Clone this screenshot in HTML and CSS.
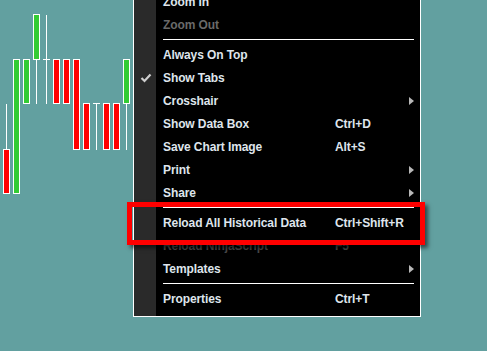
FILE: index.html
```html
<!DOCTYPE html>
<html lang="en">
<head>
    <meta charset="UTF-8">
    <meta name="viewport" content="width=device-width, initial-scale=1.0">
    <title>Chart Context Menu</title>
    <link rel="stylesheet" href="styles.css">
</head>
<body>
    <div class="chart">
        <svg width="133" height="351" viewBox="0 0 133 351">
            <g stroke="#fff" stroke-width="1" fill="none">
                <line x1="6.5" y1="104" x2="6.5" y2="149"/>
                <line x1="36.5" y1="59" x2="36.5" y2="104"/>
                <line x1="46.5" y1="15" x2="46.5" y2="104"/>
                <line x1="43" y1="59.5" x2="50" y2="59.5"/>
                <line x1="96.5" y1="103" x2="96.5" y2="150"/>
                <line x1="93" y1="103.5" x2="100" y2="103.5"/>
                <line x1="126.5" y1="103" x2="126.5" y2="150"/>
            </g>
            <g stroke="#fff" stroke-width="1">
                <rect class="down" x="3.5" y="149.5" width="6" height="44"/>
                <rect class="up" x="13.5" y="59.5" width="6" height="134"/>
                <rect class="up" x="23.5" y="59.5" width="6" height="44"/>
                <rect class="up" x="33.5" y="14.5" width="6" height="45"/>
                <rect class="down" x="53.5" y="59.5" width="6" height="44"/>
                <rect class="down" x="63.5" y="59.5" width="6" height="44"/>
                <rect class="down" x="73.5" y="59.5" width="6" height="90"/>
                <rect class="down" x="83.5" y="103.5" width="6" height="46"/>
                <rect class="down" x="103.5" y="103.5" width="6" height="46"/>
                <rect class="down" x="113.5" y="103.5" width="6" height="46"/>
                <rect class="up" x="123.5" y="59.5" width="6" height="44"/>
            </g>
        </svg>
    </div>

    <div class="menu">
        <div class="item"><span class="icon"></span><span class="label">Zoom In</span><span class="key"></span><span class="sub"></span></div>
        <div class="item disabled"><span class="icon"></span><span class="label">Zoom Out</span><span class="key"></span><span class="sub"></span></div>
        <div class="sep"></div>
        <div class="item"><span class="icon"></span><span class="label">Always On Top</span><span class="key"></span><span class="sub"></span></div>
        <div class="item">
            <span class="icon">
                <svg width="12" height="10" viewBox="0 0 12 10"><polyline points="1.5,5 4.5,8 10.5,1.5" fill="none" stroke="#cfcfcf" stroke-width="2.2"/></svg>
            </span>
            <span class="label">Show Tabs</span><span class="key"></span><span class="sub"></span>
        </div>
        <div class="item"><span class="icon"></span><span class="label">Crosshair</span><span class="key"></span><span class="sub"><i class="arrow"></i></span></div>
        <div class="item"><span class="icon"></span><span class="label">Show Data Box</span><span class="key">Ctrl+D</span><span class="sub"></span></div>
        <div class="item"><span class="icon"></span><span class="label">Save Chart Image</span><span class="key">Alt+S</span><span class="sub"></span></div>
        <div class="item"><span class="icon"></span><span class="label">Print</span><span class="key"></span><span class="sub"><i class="arrow"></i></span></div>
        <div class="item"><span class="icon"></span><span class="label">Share</span><span class="key"></span><span class="sub"><i class="arrow"></i></span></div>
        <div class="sep"></div>
        <div class="item"><span class="icon"></span><span class="label">Reload All Historical Data</span><span class="key">Ctrl+Shift+R</span><span class="sub"></span></div>
        <div class="item muted"><span class="icon"></span><span class="label">Reload NinjaScript</span><span class="key">F5</span><span class="sub"></span></div>
        <div class="item"><span class="icon"></span><span class="label">Templates</span><span class="key"></span><span class="sub"><i class="arrow"></i></span></div>
        <div class="sep"></div>
        <div class="item"><span class="icon"></span><span class="label">Properties</span><span class="key">Ctrl+T</span><span class="sub"></span></div>
    </div>

    <div class="highlight"></div>
</body>
</html>
```

FILE: styles.css
```css
body {
    margin: 0;
    background: #62a0a0;
    font-family: "Liberation Sans", Arial, sans-serif;
    overflow: hidden;
}
.chart {
    height: 351px;
}
.chart svg {
    display: block;
}
.up {
    fill: #33cc33;
}
.down {
    fill: #ff0000;
}
.menu {
    position: absolute;
    left: 133px;
    top: -14px;
    width: 286px;
    border: 1px solid #fff;
    padding: 3px 0 6px;
    background: linear-gradient(90deg, #2a2a2a 22px, #000 22px);
    font-size: 12px;
    font-weight: bold;
    letter-spacing: -0.1px;
    color: #dfe5ec;
}
.item {
    display: grid;
    grid-template-columns: 22px 179px 70px 15px;
    height: 23px;
    align-items: center;
}
.icon {
    display: flex;
    justify-content: center;
    align-items: center;
    padding-left: 1px;
}
.icon svg {
    display: block;
}
.label {
    padding-left: 7px;
    white-space: nowrap;
}
.key {
    white-space: nowrap;
}
.sub {
    display: flex;
    padding-left: 4px;
}
.arrow {
    width: 0;
    height: 0;
    border-top: 4px solid transparent;
    border-bottom: 4px solid transparent;
    border-left: 5px solid #b8b8b8;
}
.disabled {
    color: #6a6a6a;
}
.muted {
    color: #474747;
}
.sep {
    height: 1px;
    margin: 3px 6px 3px 29px;
    background: #fff;
}
.highlight {
    position: absolute;
    left: 127px;
    top: 202px;
    width: 288px;
    height: 33px;
    border: 5px solid #ff0000;
    box-shadow: 3px 3px 4px rgba(0, 0, 0, 0.55);
}
```
